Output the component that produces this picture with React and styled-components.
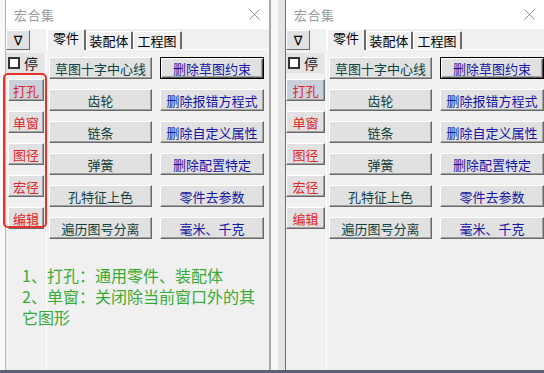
import React from 'react';
import styled, { createGlobalStyle, css } from 'styled-components';

const GlobalStyle = createGlobalStyle`
  html, body {
    margin: 0;
    padding: 0;
    background: #f0f0f0;
  }
  body {
    font-family: "Noto Sans CJK SC", "Noto Sans", sans-serif;
  }
`;

const Screen = styled.div`
  width: 544px;
  height: 373px;
  display: flex;
  flex-direction: column;
  overflow: hidden;
  background: #f8f8f8;
`;

const Desktop = styled.div`
  flex: 1;
  display: flex;
  padding-left: 5px;
`;

const Taskbar = styled.div`
  height: 3px;
  background: #5b6370;
`;

const Gap = styled.div`
  width: 14px;
  background: linear-gradient(to right, #f6f6f6 0 7px, #e4e4e4 7px);
`;

const Panel = styled.div`
  position: relative;
  width: ${p => (p.$width ? `${p.$width}px` : 'auto')};
  flex: ${p => (p.$width ? 'none' : '1')};
  display: flex;
  flex-direction: column;
  background: #f0f0f0;
  border-left: 1px solid ${p => (p.$annotated ? '#b4b4b4' : '#6e6e6e')};
  border-right: ${p => (p.$width ? '2px solid #a8a8a8' : 'none')};
`;

const TitleBar = styled.div`
  height: 29px;
  background: #fff;
  display: flex;
  align-items: center;
  justify-content: space-between;
  padding: 0 9px 0 8px;
`;

const Title = styled.span`
  font-size: 13px;
  color: #9a9a9a;
  letter-spacing: 0.5px;
`;

const Body = styled.div`
  flex: 1;
  display: flex;
`;

const Sidebar = styled.div`
  width: 40px;
  border-right: 1px solid #fff;
  display: flex;
  flex-direction: column;
  padding-top: 1px;
`;

const ArrowButton = styled.div`
  width: 24px;
  height: 20px;
  box-sizing: border-box;
  background: #e1e1e1;
  border-top: 1px solid #fff;
  border-left: 1px solid #fff;
  border-right: 1px solid #696969;
  border-bottom: 1px solid #696969;
  display: flex;
  align-items: center;
  justify-content: center;
  font-family: "DejaVu Sans", sans-serif;
  font-size: 13px;
  color: #000;
`;

const StopRow = styled.label`
  margin-top: 3px;
  width: 38px;
  height: 20px;
  background: #e3e3e3;
  display: flex;
  align-items: center;
  gap: 4px;
  padding-left: 2px;
  box-sizing: border-box;
  font-size: 14px;
  color: #111;
`;

const Box = styled.span`
  width: 12px;
  height: 12px;
  flex: none;
  box-sizing: border-box;
  border: 2px solid #333;
  background: #fff;
`;

const SideButtons = styled.div`
  margin-top: 6px;
  display: flex;
  flex-direction: column;
  gap: 10px;
  padding: 0 ${p => (p.$inset ? '2px' : '0')};
`;

const raised = css`
  box-sizing: border-box;
  border-top: 1px solid #fff;
  border-left: 1px solid #fff;
  border-right: 1px solid #696969;
  border-bottom: 1px solid #696969;
  box-shadow: inset -1px -1px 0 #a0a0a0;
`;

const SideButton = styled.div`
  ${raised}
  height: 22px;
  width: ${p => (p.$inset ? '36px' : '39px')};
  background: ${p => (p.$active ? '#c9d1da' : '#e1e1e1')};
  color: #e0262c;
  font-size: 13px;
  display: flex;
  align-items: center;
  justify-content: center;
`;

const Content = styled.div`
  flex: 1;
  display: flex;
  flex-direction: column;
`;

const TabRow = styled.div`
  height: 21px;
  display: flex;
  align-items: flex-end;
  border-bottom: 1px solid #fff;
  box-sizing: border-box;
`;

const Tab = styled.div`
  width: ${p => p.$w}px;
  height: ${p => (p.$active ? 21 : 18)}px;
  box-sizing: border-box;
  border-top: 1px solid #fff;
  border-left: 1px solid #fff;
  border-right: 2px solid #696969;
  border-radius: 2px 2px 0 0;
  font-size: 13px;
  color: #000;
  display: flex;
  align-items: ${p => (p.$active ? 'flex-start' : 'center')};
  justify-content: center;
  line-height: 16px;
  background: #f0f0f0;
  margin-bottom: ${p => (p.$active ? '-1px' : '0')};
`;

const Grid = styled.div`
  display: grid;
  grid-template-columns: 103px 104px;
  column-gap: 8px;
  row-gap: 10px;
  grid-auto-rows: 22px;
  padding: 7px 0 0 2px;
`;

const Action = styled.div`
  ${raised}
  background: #e1e1e1;
  font-size: 13px;
  display: flex;
  align-items: center;
  justify-content: center;
  color: ${p => (p.$danger ? '#1414a4' : '#0f4242')};
  ${p =>
    p.$default &&
    css`
      border: 1px solid #000;
      box-shadow: inset 1px 1px 0 #fff, inset -1px -1px 0 #555, inset -2px -2px 0 #a0a0a0;
    `}
`;

const Highlight = styled.div`
  position: absolute;
  left: -3px;
  top: 73px;
  width: 44px;
  height: 155px;
  box-sizing: border-box;
  border: 2px solid #e8302a;
  border-radius: 5px;
  pointer-events: none;
`;

const Note = styled.div`
  position: absolute;
  left: 16px;
  top: 265px;
  width: 242px;
  font-size: 16px;
  line-height: 21px;
  color: #3aaa36;
`;

const NoteLine = styled.div`
  height: 21px;
  white-space: nowrap;
`;

const TOOLS = [
  ['草图十字中心线', '删除草图约束'],
  ['齿轮', '删除报错方程式'],
  ['链条', '删除自定义属性'],
  ['弹簧', '删除配置特定'],
  ['孔特征上色', '零件去参数'],
  ['遍历图号分离', '毫米、千克'],
];

const SIDE = ['打孔', '单窗', '图径', '宏径', '编辑'];

const TABS = [
  { label: '零件', w: 39 },
  { label: '装配体', w: 47 },
  { label: '工程图', w: 49 },
];

const NOTES = ['1、打孔：通用零件、装配体', '2、单窗：关闭除当前窗口外的其', '它图形'];

function CloseIcon() {
  return (
    <svg width="11" height="11" viewBox="0 0 11 11">
      <path d="M0.5 0.5 L10.5 10.5 M10.5 0.5 L0.5 10.5" stroke="#8a8a8a" strokeWidth="1" fill="none" />
    </svg>
  );
}

function MacroPanel({ annotated, width }) {
  return (
    <Panel $annotated={annotated} $width={width}>
      <TitleBar>
        <Title>宏合集</Title>
        <CloseIcon />
      </TitleBar>
      <Body>
        <Sidebar>
          <ArrowButton>∇</ArrowButton>
          <StopRow>
            <Box />
            停
          </StopRow>
          <SideButtons $inset={annotated}>
            {SIDE.map((s, i) => (
              <SideButton key={s} $active={i === 0} $inset={annotated}>
                {s}
              </SideButton>
            ))}
          </SideButtons>
        </Sidebar>
        <Content>
          <TabRow>
            {TABS.map((t, i) => (
              <Tab key={t.label} $w={t.w} $active={i === 0}>
                {t.label}
              </Tab>
            ))}
          </TabRow>
          <Grid>
            {TOOLS.map(([a, b], i) => (
              <React.Fragment key={a}>
                <Action>{a}</Action>
                <Action $danger $default={i === 0}>
                  {b}
                </Action>
              </React.Fragment>
            ))}
          </Grid>
        </Content>
      </Body>
      {annotated && (
        <>
          <Highlight />
          <Note>
            {NOTES.map(n => (
              <NoteLine key={n}>{n}</NoteLine>
            ))}
          </Note>
        </>
      )}
    </Panel>
  );
}

export default function App() {
  return (
    <>
      <GlobalStyle />
      <Screen>
        <Desktop>
          <MacroPanel annotated width={263} />
          <Gap />
          <MacroPanel />
        </Desktop>
        <Taskbar />
      </Screen>
    </>
  );
}
